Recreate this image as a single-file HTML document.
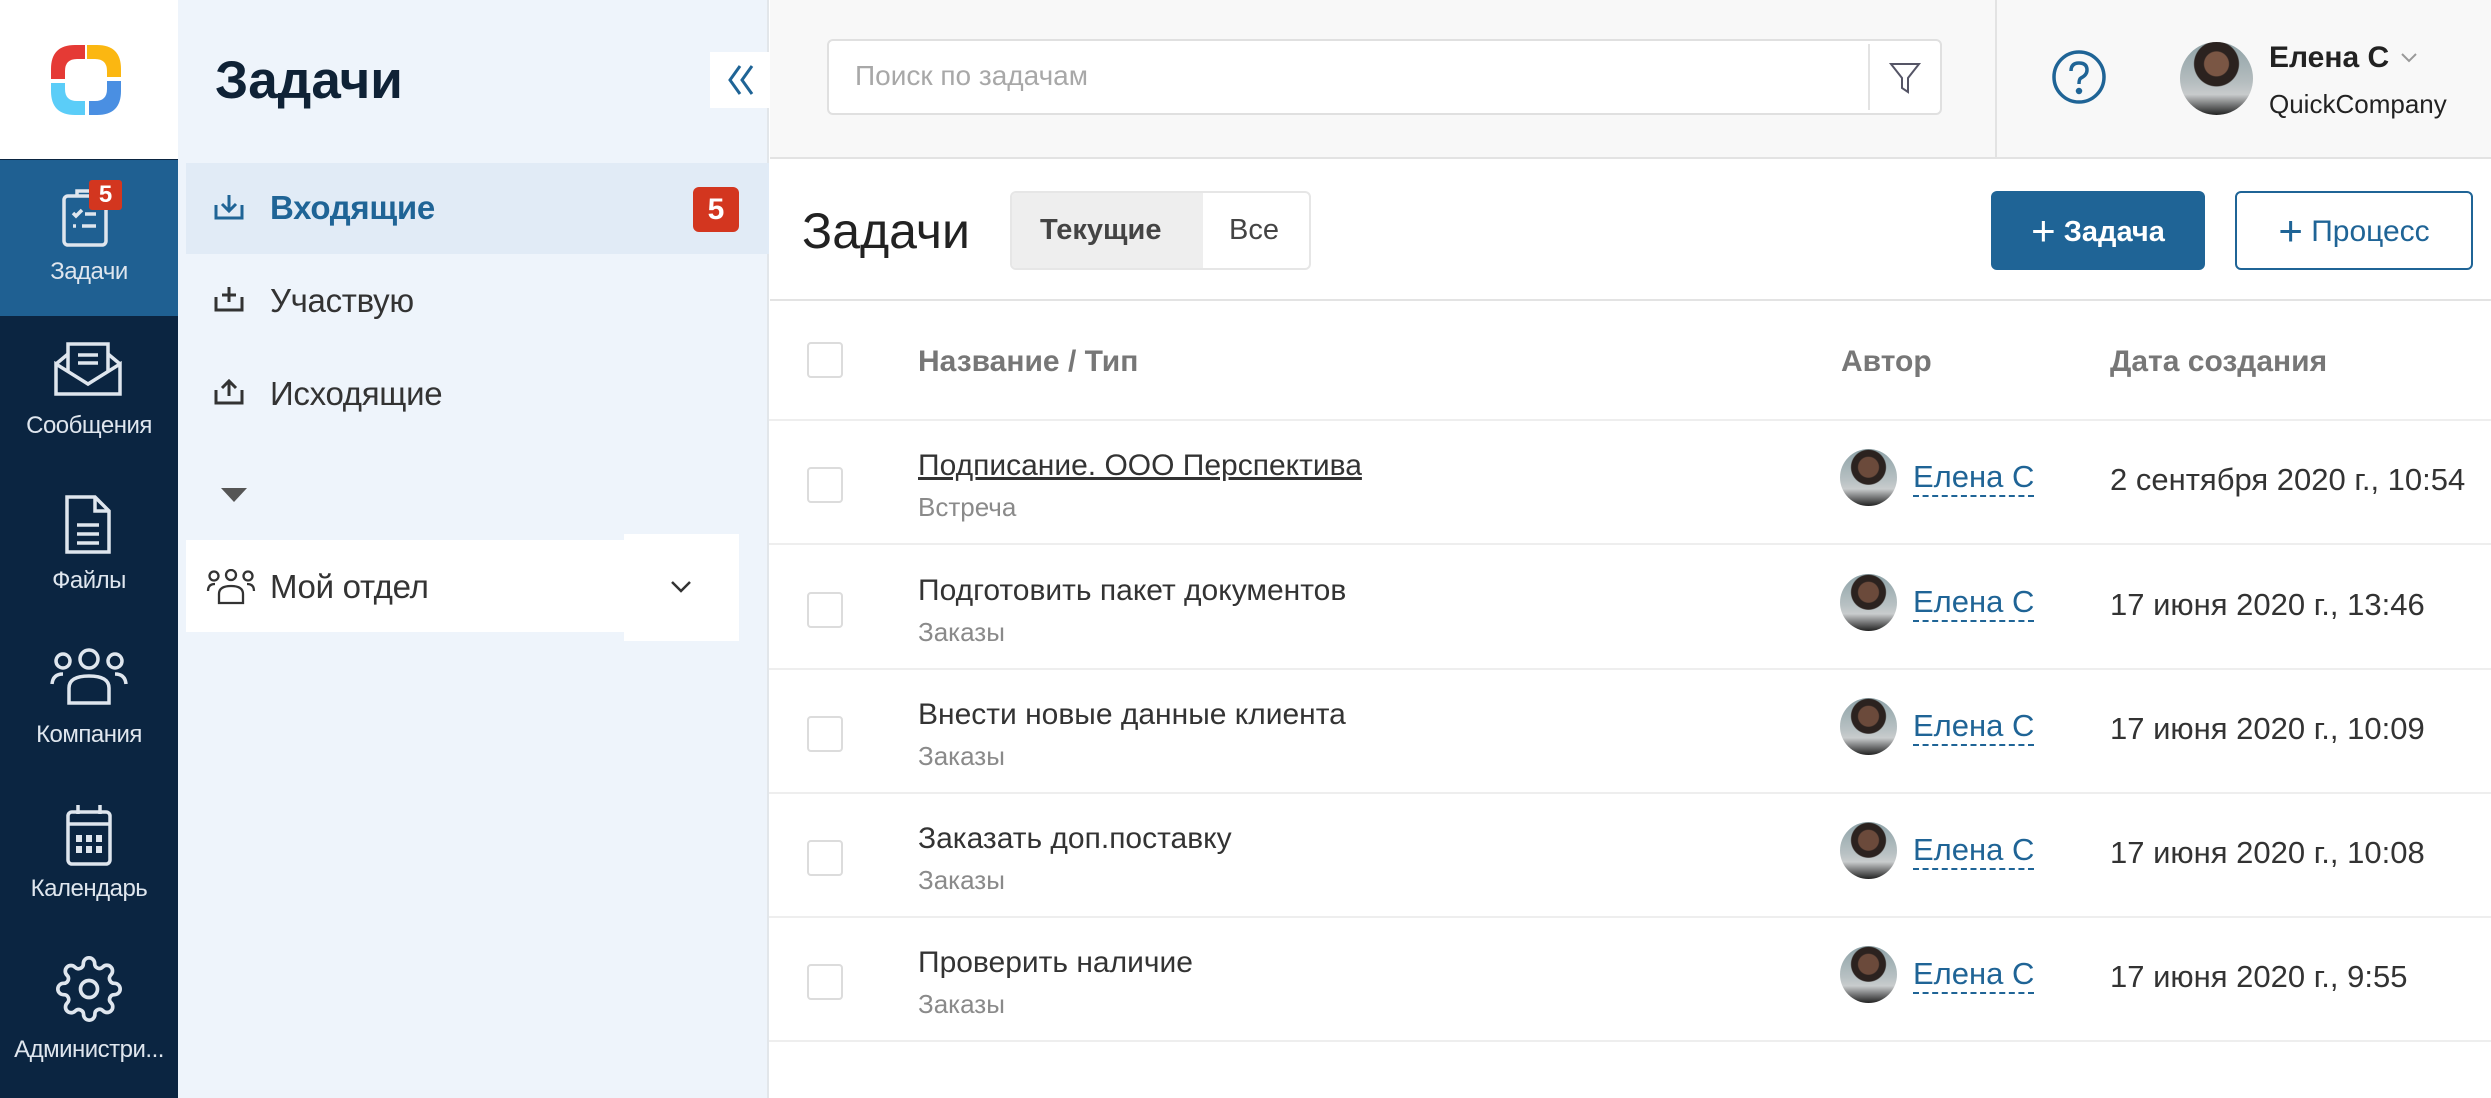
<!DOCTYPE html>
<html><head><meta charset="utf-8"><style>
*{box-sizing:border-box;margin:0;padding:0}
body{width:2491px;height:1098px;overflow:hidden;font-family:"Liberation Sans",sans-serif;background:#fff;position:relative;color:#333}
.a{position:absolute}
.nav{left:0;top:0;width:178px;height:1098px;background:#0b2541}
.navlbl{position:absolute;left:0;width:178px;text-align:center;color:#dfe6ee;font-size:24px;letter-spacing:-0.5px}
.side{left:178px;top:0;width:591px;height:1098px;background:#eef4fb;border-right:2px solid #e2e6ea}
.sitem{position:absolute;left:270px;font-size:33px;color:#333;letter-spacing:-0.3px}
.row{position:absolute;left:769px;width:1722px;height:124px;border-bottom:2px solid #eeeeee}
.cb{position:absolute;left:38px;width:36px;height:36px;border:2px solid #dcdcdc;border-radius:4px;background:#fff}
.t1{position:absolute;left:149px;font-size:30px;color:#333}
.t2{position:absolute;left:149px;font-size:26px;color:#8a8a8a}
.av{position:absolute;width:57px;height:57px;border-radius:50%;background:radial-gradient(circle at 50% 32%,#6b4a3b 0 10px,#2b221f 11px 17px,transparent 18px),linear-gradient(180deg,#8ea3a8 0%,#b8c1c3 55%,#c9cccd 70%,#222 100%);overflow:hidden}
.au{position:absolute;left:1144px;font-size:31px;color:#1f6496;border-bottom:2px dashed #1f6496;line-height:36px}
.dt{position:absolute;left:1341px;font-size:31px;color:#333}
</style></head><body>
<!-- left nav -->
<div class="a nav"></div>
<div class="a" style="left:0;top:0;width:178px;height:159px;background:#fff"></div>
<svg class="a" style="left:48px;top:42px" width="76" height="76" viewBox="0 0 76 76">
<path d="M37 3 H27 Q3 3 3 27 V37 H17 V29 Q17 17 29 17 H37 Z" fill="#e53a35"/>
<path d="M39 3 H49 Q73 3 73 27 V35 H59 V29 Q59 17 47 17 H39 Z" fill="#fbb711"/>
<path d="M73 39 V49 Q73 73 49 73 H41 V59 H47 Q59 59 59 47 V39 Z" fill="#4a8fe2"/>
<path d="M3 41 V49 Q3 73 27 73 H37 V59 H29 Q17 59 17 47 V41 Z" fill="#5bcdf8"/>
</svg>
<div class="a" style="left:0;top:160px;width:178px;height:156px;background:#1f6092"></div>
<svg class="a" style="left:60px;top:186px" width="54" height="62" viewBox="0 0 54 62" fill="none" stroke="#dfe6ee" stroke-width="3.5">
<rect x="4" y="10" width="42" height="49" rx="4"/><path d="M17 10 V5 H33 V10"/><path d="M13 27 l3 3 6-6 M25 28 H36 M13 40 h3 M22 40 H36"/>
</svg>
<div class="a" style="left:89px;top:180px;width:33px;height:30px;background:#d3361f;border-radius:3px;color:#fff;font-size:24px;font-weight:bold;text-align:center;line-height:30px">5</div>
<div class="navlbl" style="top:258px">Задачи</div>
<svg class="a" style="left:52px;top:340px" width="72" height="58" viewBox="0 0 72 58" fill="none" stroke="#dfe6ee" stroke-width="3.5">
<path d="M4 24 V54 H68 V24 L36 44 Z"/><path d="M4 24 L16 14 M68 24 L56 14"/><path d="M16 32 V4 H56 V32"/><path d="M26 15 H46 M26 23 H46"/>
</svg>
<div class="navlbl" style="top:412px">Сообщения</div>
<svg class="a" style="left:62px;top:494px" width="52" height="62" viewBox="0 0 52 62" fill="none" stroke="#dfe6ee" stroke-width="3.5">
<path d="M5 3 H33 L47 17 V58 H5 Z"/><path d="M33 3 V17 H47"/><path d="M15 31 H37 M15 40 H37 M15 49 H37"/>
</svg>
<div class="navlbl" style="top:567px">Файлы</div>
<svg class="a" style="left:49px;top:648px" width="80" height="60" viewBox="0 0 80 60" fill="none" stroke="#dfe6ee" stroke-width="3.5">
<circle cx="14" cy="13" r="7"/><circle cx="40" cy="11" r="9"/><circle cx="66" cy="13" r="7"/>
<path d="M3 36 Q4 26 14 26 M77 36 Q76 26 66 26"/><path d="M20 55 V40 Q20 28 40 28 Q60 28 60 40 V55 Z"/>
</svg>
<div class="navlbl" style="top:721px">Компания</div>
<svg class="a" style="left:64px;top:802px" width="50" height="65" viewBox="0 0 50 65" fill="none" stroke="#dfe6ee" stroke-width="3.5">
<rect x="4" y="10" width="42" height="52" rx="4"/><path d="M4 22 H46 M14 3 V12 M36 3 V12"/>
<g fill="#dfe6ee" stroke="none"><rect x="12" y="33" width="6" height="7"/><rect x="22" y="33" width="6" height="7"/><rect x="32" y="33" width="6" height="7"/><rect x="12" y="44" width="6" height="7"/><rect x="22" y="44" width="6" height="7"/><rect x="32" y="44" width="6" height="7"/></g>
</svg>
<div class="navlbl" style="top:875px">Календарь</div>
<svg class="a" style="left:55px;top:955px" width="68" height="68" viewBox="0 0 24 24" fill="none" stroke="#dfe6ee" stroke-width="1.3">
<circle cx="12" cy="12" r="3"/><path d="M19.4 15a1.65 1.65 0 0 0 .33 1.82l.06.06a2 2 0 1 1-2.830 2.83l-.06-.06a1.65 1.65 0 0 0-1.820-.33 1.65 1.65 0 0 0-1 1.51V21a2 2 0 1 1-4 0v-.09A1.65 1.65 0 0 0 9 19.4a1.65 1.65 0 0 0-1.82.33l-.06.06a2 2 0 1 1-2.830-2.83l.06-.06A1.65 1.65 0 0 0 4.68 15a1.65 1.65 0 0 0-1.51-1H3a2 2 0 1 1 0-4h.09A1.65 1.65 0 0 0 4.6 9a1.65 1.65 0 0 0-.33-1.82l-.06-.06a2 2 0 1 1 2.830-2.83l.06.06A1.65 1.65 0 0 0 9 4.68 1.65 1.65 0 0 0 10 3.17V3a2 2 0 1 1 4 0v.09a1.65 1.65 0 0 0 1 1.51 1.65 1.65 0 0 0 1.82-.33l.06-.06a2 2 0 1 1 2.830 2.83l-.06.06A1.65 1.65 0 0 0 19.4 9a1.65 1.65 0 0 0 1.51 1H21a2 2 0 1 1 0 4h-.09a1.65 1.65 0 0 0-1.51 1z"/>
</svg>
<div class="navlbl" style="top:1036px;font-size:24px">Администри...</div>

<!-- second sidebar -->
<div class="a side"></div>
<div class="a" style="left:215px;top:50px;font-size:53px;font-weight:bold;color:#0f2236">Задачи</div>
<div class="a" style="left:710px;top:52px;width:59px;height:56px;background:#fff"></div>
<svg class="a" style="left:725px;top:63px" width="32" height="34" viewBox="0 0 32 34" fill="none" stroke="#1f6496" stroke-width="3"><path d="M15 3 L5 17 L15 31 M27 3 L17 17 L27 31"/></svg>
<div class="a" style="left:186px;top:163px;width:583px;height:91px;background:#e1ebf6"></div>
<svg class="a" style="left:213px;top:193px" width="32" height="28" viewBox="0 0 32 28" fill="none" stroke="#1f6496" stroke-width="3"><path d="M3 12 V25 H29 V12 M16 2 V17 M9 11 L16 18 L23 11"/></svg>
<div class="sitem" style="top:189px;color:#1f6496;font-weight:bold">Входящие</div>
<div class="a" style="left:693px;top:187px;width:46px;height:45px;background:#d3361f;border-radius:6px;color:#fff;font-size:30px;font-weight:bold;text-align:center;line-height:45px">5</div>
<svg class="a" style="left:213px;top:285px" width="32" height="28" viewBox="0 0 32 28" fill="none" stroke="#333" stroke-width="3"><path d="M3 12 V25 H29 V12 M16 2 V17 M9 10 H23"/></svg>
<div class="sitem" style="top:282px">Участвую</div>
<svg class="a" style="left:213px;top:378px" width="32" height="28" viewBox="0 0 32 28" fill="none" stroke="#333" stroke-width="3"><path d="M3 12 V25 H29 V12 M16 3 V18 M9 10 L16 3 L23 10"/></svg>
<div class="sitem" style="top:375px">Исходящие</div>
<div class="a" style="left:221px;top:488px;width:0;height:0;border-left:13px solid transparent;border-right:13px solid transparent;border-top:14px solid #555"></div>
<div class="a" style="left:186px;top:540px;width:438px;height:92px;background:#fff"></div>
<div class="a" style="left:624px;top:534px;width:115px;height:107px;background:#fff"></div>
<svg class="a" style="left:206px;top:569px" width="50" height="36" viewBox="0 0 50 36" fill="none" stroke="#333" stroke-width="2.3"><circle cx="8" cy="7" r="4.5"/><circle cx="25" cy="6" r="5"/><circle cx="42" cy="7" r="4.5"/><path d="M2 22 Q2 15 9 15 M48 22 Q48 15 41 15 M13 34 V25 Q13 17 25 17 Q37 17 37 25 V34 Z"/></svg>
<div class="sitem" style="top:568px">Мой отдел</div>
<svg class="a" style="left:670px;top:580px" width="22" height="14" viewBox="0 0 22 14" fill="none" stroke="#333" stroke-width="2.5"><path d="M2 2 L11 11 L20 2"/></svg>

<!-- header -->
<div class="a" style="left:770px;top:0;width:1721px;height:159px;background:#f8f8f8;border-bottom:2px solid #e3e3e3"></div>
<div class="a" style="left:1995px;top:0;width:2px;height:159px;background:#e3e3e3"></div>
<div class="a" style="left:827px;top:39px;width:1115px;height:76px;background:#fff;border:2px solid #e0e0e0;border-radius:6px"></div>
<div class="a" style="left:1868px;top:44px;width:2px;height:66px;background:#e3e3e3"></div>
<div class="a" style="left:855px;top:60px;font-size:28px;color:#a8a8a8">Поиск по задачам</div>
<svg class="a" style="left:1888px;top:60px" width="34" height="36" viewBox="0 0 34 36" fill="none" stroke="#556" stroke-width="2"><path d="M3 4 H31 L20 18 V32 L14 28 V18 Z"/></svg>
<svg class="a" style="left:2051px;top:49px" width="56" height="56" viewBox="0 0 56 56" fill="none" stroke="#1f6496" stroke-width="3.5"><circle cx="28" cy="28" r="25"/><path d="M20 22 Q20 14 28 14 Q36 14 36 21 Q36 26 30 29 Q28 30 28 35"/><circle cx="28" cy="42" r="1.5" fill="#1f6496"/></svg>
<div class="av" style="left:2180px;top:42px;width:73px;height:73px;background:radial-gradient(circle at 50% 30%,#7a5644 0 12px,#2b221f 13px 22px,transparent 23px),linear-gradient(180deg,#8fa2a6 0%,#b5bdbf 55%,#c8cbcc 72%,#222 100%)"></div>
<div class="a" style="left:2269px;top:41px;font-size:30px;font-weight:bold;color:#222">Елена С</div>
<svg class="a" style="left:2400px;top:52px" width="18" height="12" viewBox="0 0 18 12" fill="none" stroke="#999" stroke-width="2"><path d="M2 2 L9 9 L16 2"/></svg>
<div class="a" style="left:2269px;top:89px;font-size:26px;color:#222">QuickCompany</div>

<!-- toolbar -->
<div class="a" style="left:802px;top:202px;font-size:50px;color:#222">Задачи</div>
<div class="a" style="left:1010px;top:191px;width:301px;height:79px;border:2px solid #e6e6e6;border-radius:6px;background:#fff;overflow:hidden"><div style="width:191px;height:100%;background:#eeeeee"></div></div>
<div class="a" style="left:1040px;top:214px;font-size:29px;font-weight:bold;color:#444">Текущие</div>
<div class="a" style="left:1229px;top:214px;font-size:29px;color:#444">Все</div>
<div class="a" style="left:1991px;top:191px;width:214px;height:79px;background:#1f6496;border-radius:6px;color:#fff;font-size:29px;font-weight:bold;line-height:79px;text-align:center"><span style="font-size:42px;font-weight:normal;vertical-align:-4px">+</span> Задача</div>
<div class="a" style="left:2235px;top:191px;width:238px;height:79px;border:2px solid #1f6496;border-radius:6px;color:#1f6496;font-size:30px;line-height:75px;text-align:center"><span style="font-size:42px;vertical-align:-4px">+</span> Процесс</div>
<div class="a" style="left:770px;top:299px;width:1721px;height:2px;background:#e3e3e3"></div>

<!-- table header -->
<div class="row" style="top:301px;height:120px">
<div class="cb" style="top:41px"></div>
<div class="a" style="left:149px;top:44px;font-size:30px;font-weight:bold;color:#777">Название / Тип</div>
<div class="a" style="left:1072px;top:44px;font-size:30px;font-weight:bold;color:#777">Автор</div>
<div class="a" style="left:1341px;top:44px;font-size:30px;font-weight:bold;color:#777">Дата создания</div>
</div>

<div class="row" style="top:421px">
<div class="cb" style="top:46px"></div>
<div class="t1" style="top:28px;text-decoration:underline">Подписание. ООО Перспектива</div>
<div class="t2" style="top:71px">Встреча</div>
<div class="av" style="left:1071px;top:28px"></div>
<div class="au" style="top:38px">Елена С</div>
<div class="dt" style="top:41px">2 сентября 2020 г., 10:54</div>
</div>
<div class="row" style="top:546px">
<div class="cb" style="top:46px"></div>
<div class="t1" style="top:28px">Подготовить пакет документов</div>
<div class="t2" style="top:71px">Заказы</div>
<div class="av" style="left:1071px;top:28px"></div>
<div class="au" style="top:38px">Елена С</div>
<div class="dt" style="top:41px">17 июня 2020 г., 13:46</div>
</div>
<div class="row" style="top:670px">
<div class="cb" style="top:46px"></div>
<div class="t1" style="top:28px">Внести новые данные клиента</div>
<div class="t2" style="top:71px">Заказы</div>
<div class="av" style="left:1071px;top:28px"></div>
<div class="au" style="top:38px">Елена С</div>
<div class="dt" style="top:41px">17 июня 2020 г., 10:09</div>
</div>
<div class="row" style="top:794px">
<div class="cb" style="top:46px"></div>
<div class="t1" style="top:28px">Заказать доп.поставку</div>
<div class="t2" style="top:71px">Заказы</div>
<div class="av" style="left:1071px;top:28px"></div>
<div class="au" style="top:38px">Елена С</div>
<div class="dt" style="top:41px">17 июня 2020 г., 10:08</div>
</div>
<div class="row" style="top:918px">
<div class="cb" style="top:46px"></div>
<div class="t1" style="top:28px">Проверить наличие</div>
<div class="t2" style="top:71px">Заказы</div>
<div class="av" style="left:1071px;top:28px"></div>
<div class="au" style="top:38px">Елена С</div>
<div class="dt" style="top:41px">17 июня 2020 г., 9:55</div>
</div>
</body></html>
